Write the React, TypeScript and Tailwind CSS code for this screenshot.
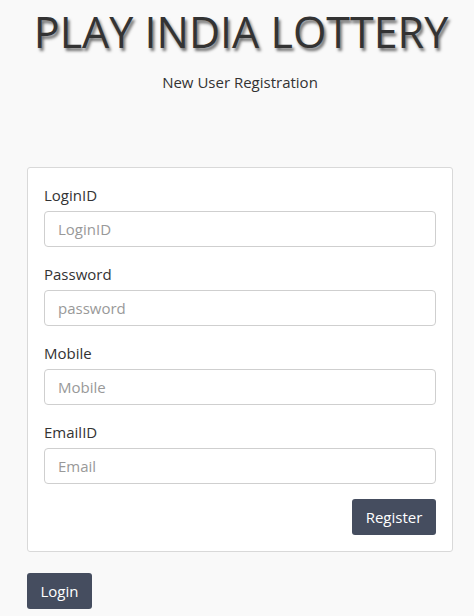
import React from "react";

const fields = [
  { label: "LoginID", placeholder: "LoginID", type: "text" },
  { label: "Password", placeholder: "password", type: "password" },
  { label: "Mobile", placeholder: "Mobile", type: "text" },
  { label: "EmailID", placeholder: "Email", type: "text" },
];

export default function App() {
  return (
    <div
      className="min-h-[616px] w-full bg-[#f9f9f9] text-[#333]"
      style={{ fontFamily: '"Open Sans", "Noto Sans", sans-serif' }}
    >
      <div className="pt-[4px]">
        <h1 className="whitespace-nowrap pl-[8px] text-center text-[43px] leading-[56px] font-medium text-[#333] [text-shadow:2px_3px_3px_rgba(0,0,0,0.55)]">
          PLAY INDIA LOTTERY
        </h1>
        <p className="mt-[10px] pl-[6px] text-center text-[15px] leading-[24px] text-[#333]">
          New User Registration
        </p>
        <div className="ml-[27px] mt-[73px] w-[426px] rounded-[3px] border border-[#d9d9d9] bg-white px-4 pt-[15px] pb-4">
          {fields.map((f) => (
            <div key={f.label} className="mb-[15px]">
              <label className="mb-[4px] block text-[15px] leading-[24px] text-[#333]">
                {f.label}
              </label>
              <input
                type={f.type}
                placeholder={f.placeholder}
                className="block h-[36px] w-full rounded-[4px] border border-[#cfcfcf] bg-white px-[13px] text-[15px] text-[#555] outline-none placeholder:text-[#999]"
              />
            </div>
          ))}
          <div className="flex justify-end">
            <button className="h-[36px] w-[84px] rounded-[3px] bg-[#454d5f] text-[15px] text-white">
              Register
            </button>
          </div>
        </div>
        <button className="ml-[27px] mt-[21px] h-[36px] w-[65px] rounded-[3px] bg-[#454d5f] text-[15px] text-white">
          Login
        </button>
      </div>
    </div>
  );
}
